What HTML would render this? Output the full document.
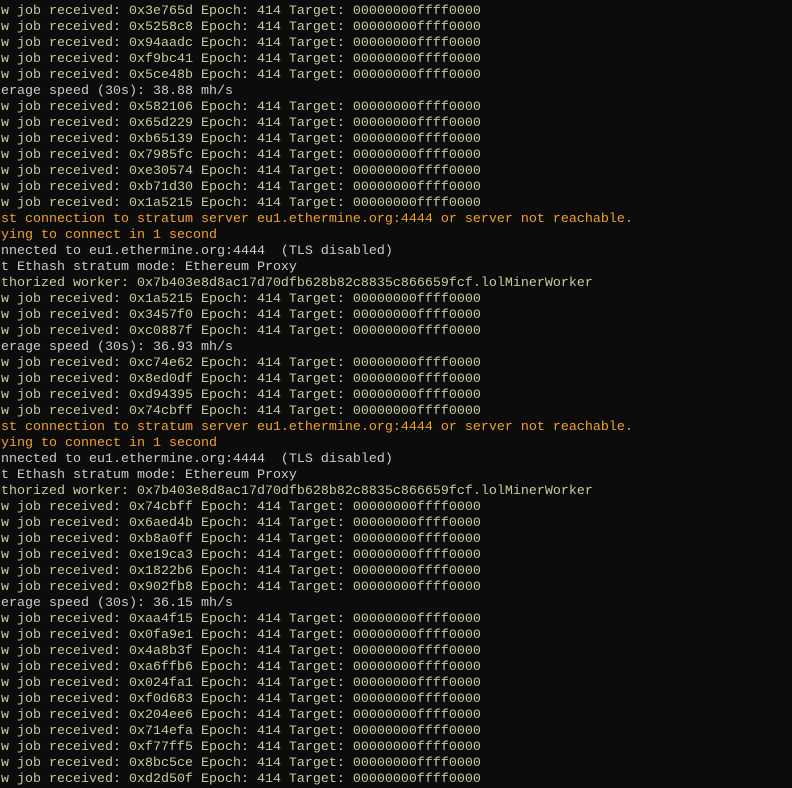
<!DOCTYPE html>
<html><head><meta charset="utf-8"><style>
html,body{margin:0;padding:0;background:#0c0c0c;width:792px;height:776px;overflow:hidden}
pre{margin:0;position:absolute;top:4px;left:1px;font-family:"Liberation Mono",monospace;font-size:13.33px;line-height:16px;color:#ccc8a0;white-space:pre}
.g{color:#cccccc}.o{color:#f0a030}
</style></head><body><pre>w job received: 0x3e765d Epoch: 414 Target: 00000000ffff0000
w job received: 0x5258c8 Epoch: 414 Target: 00000000ffff0000
w job received: 0x94aadc Epoch: 414 Target: 00000000ffff0000
w job received: 0xf9bc41 Epoch: 414 Target: 00000000ffff0000
w job received: 0x5ce48b Epoch: 414 Target: 00000000ffff0000
<span class="g">erage speed (30s): 38.88 mh/s</span>
w job received: 0x582106 Epoch: 414 Target: 00000000ffff0000
w job received: 0x65d229 Epoch: 414 Target: 00000000ffff0000
w job received: 0xb65139 Epoch: 414 Target: 00000000ffff0000
w job received: 0x7985fc Epoch: 414 Target: 00000000ffff0000
w job received: 0xe30574 Epoch: 414 Target: 00000000ffff0000
w job received: 0xb71d30 Epoch: 414 Target: 00000000ffff0000
w job received: 0x1a5215 Epoch: 414 Target: 00000000ffff0000
<span class="o">st connection to stratum server eu1.ethermine.org:4444 or server not reachable.
ying to connect in 1 second</span>
<span class="g">nnected to eu1.ethermine.org:4444  (TLS disabled)
t Ethash stratum mode: Ethereum Proxy</span>
thorized worker: 0x7b403e8d8ac17d70dfb628b82c8835c866659fcf.lolMinerWorker
w job received: 0x1a5215 Epoch: 414 Target: 00000000ffff0000
w job received: 0x3457f0 Epoch: 414 Target: 00000000ffff0000
w job received: 0xc0887f Epoch: 414 Target: 00000000ffff0000
<span class="g">erage speed (30s): 36.93 mh/s</span>
w job received: 0xc74e62 Epoch: 414 Target: 00000000ffff0000
w job received: 0x8ed0df Epoch: 414 Target: 00000000ffff0000
w job received: 0xd94395 Epoch: 414 Target: 00000000ffff0000
w job received: 0x74cbff Epoch: 414 Target: 00000000ffff0000
<span class="o">st connection to stratum server eu1.ethermine.org:4444 or server not reachable.
ying to connect in 1 second</span>
<span class="g">nnected to eu1.ethermine.org:4444  (TLS disabled)
t Ethash stratum mode: Ethereum Proxy</span>
thorized worker: 0x7b403e8d8ac17d70dfb628b82c8835c866659fcf.lolMinerWorker
w job received: 0x74cbff Epoch: 414 Target: 00000000ffff0000
w job received: 0x6aed4b Epoch: 414 Target: 00000000ffff0000
w job received: 0xb8a0ff Epoch: 414 Target: 00000000ffff0000
w job received: 0xe19ca3 Epoch: 414 Target: 00000000ffff0000
w job received: 0x1822b6 Epoch: 414 Target: 00000000ffff0000
w job received: 0x902fb8 Epoch: 414 Target: 00000000ffff0000
<span class="g">erage speed (30s): 36.15 mh/s</span>
w job received: 0xaa4f15 Epoch: 414 Target: 00000000ffff0000
w job received: 0x0fa9e1 Epoch: 414 Target: 00000000ffff0000
w job received: 0x4a8b3f Epoch: 414 Target: 00000000ffff0000
w job received: 0xa6ffb6 Epoch: 414 Target: 00000000ffff0000
w job received: 0x024fa1 Epoch: 414 Target: 00000000ffff0000
w job received: 0xf0d683 Epoch: 414 Target: 00000000ffff0000
w job received: 0x204ee6 Epoch: 414 Target: 00000000ffff0000
w job received: 0x714efa Epoch: 414 Target: 00000000ffff0000
w job received: 0xf77ff5 Epoch: 414 Target: 00000000ffff0000
w job received: 0x8bc5ce Epoch: 414 Target: 00000000ffff0000
w job received: 0xd2d50f Epoch: 414 Target: 00000000ffff0000
</pre></body></html>
